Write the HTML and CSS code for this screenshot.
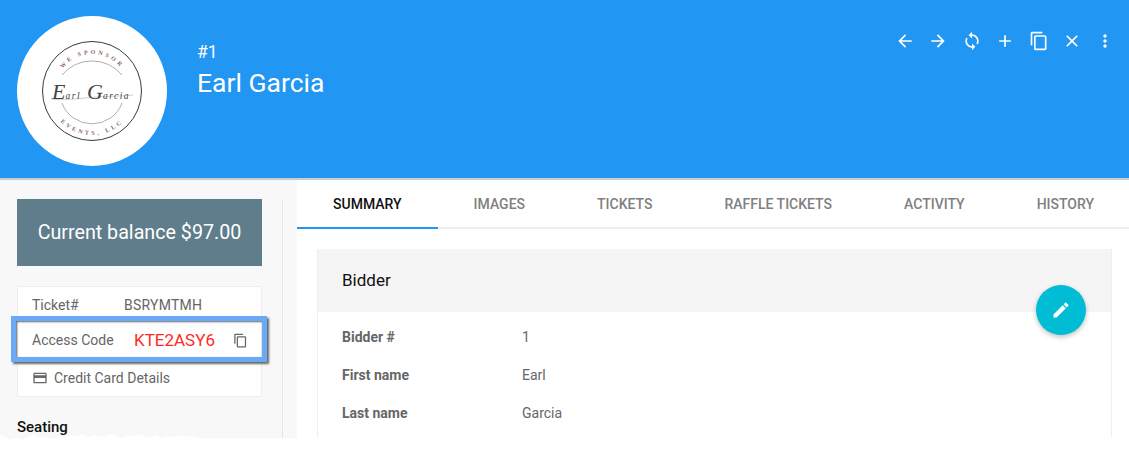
FILE: index.html
```html
<!DOCTYPE html>
<html lang="en">
<head>
    <meta charset="UTF-8">
    <title>Earl Garcia</title>
    <link rel="stylesheet" href="styles.css">
</head>
<body>

    <!-- Header -->
    <header class="topbar">
        <div class="avatar">
            <svg class="logo" viewBox="0 0 150 150" width="150" height="150">
                <defs>
                    <path id="logoTop" d="M38 75a37 37 0 0 1 74 0"/>
                    <path id="logoBottom" d="M31 75a44 44 0 0 0 88 0"/>
                </defs>
                <circle class="logo-ring" cx="75" cy="75" r="49.5"/>
                <path class="logo-arc" d="M45 59a39 39 0 0 1 60 0"/>
                <path class="logo-arc" d="M45 87a32 32 0 0 0 60 0"/>
                <text class="logo-small"><textPath href="#logoTop" startOffset="50%">WE SPONSOR</textPath></text>
                <text class="logo-small"><textPath href="#logoBottom" startOffset="50%">EVENTS, LLC</textPath></text>
                <path class="logo-swash" d="M34 83c14 2 30-1 46-2s30-1 36-2"/>
                <text class="logo-script" x="35" y="83"><tspan class="logo-cap">E</tspan>arl <tspan class="logo-cap" x="70">G</tspan>arcia</text>
            </svg>
        </div>
        <div class="title">
            <div class="title-num">#1</div>
            <div class="title-name">Earl Garcia</div>
        </div>
        <div class="actions">
            <span class="action"><svg viewBox="0 0 24 24"><path d="M20 11H7.83l5.59-5.59L12 4l-8 8 8 8 1.41-1.41L7.83 13H20v-2z"/></svg></span>
            <span class="action"><svg viewBox="0 0 24 24"><path d="M12 4l-1.41 1.41L16.17 11H4v2h12.17l-5.58 5.59L12 20l8-8z"/></svg></span>
            <span class="action"><svg viewBox="0 0 24 24"><path d="M12 4V1L8 5l4 4V6c3.31 0 6 2.69 6 6 0 1.01-.25 1.97-.7 2.8l1.46 1.46C19.54 15.03 20 13.57 20 12c0-4.42-3.58-8-8-8zm0 14c-3.31 0-6-2.69-6-6 0-1.01.25-1.97.7-2.8L5.24 7.74C4.46 8.97 4 10.43 4 12c0 4.42 3.58 8 8 8v3l4-4-4-4v3z"/></svg></span>
            <span class="action"><svg viewBox="0 0 24 24"><path d="M19 13h-6v6h-2v-6H5v-2h6V5h2v6h6v2z"/></svg></span>
            <span class="action"><svg viewBox="0 0 24 24"><path d="M16 1H4c-1.1 0-2 .9-2 2v14h2V3h12V1zm3 4H8c-1.1 0-2 .9-2 2v14c0 1.1.9 2 2 2h11c1.1 0 2-.9 2-2V7c0-1.1-.9-2-2-2zm0 16H8V7h11v14z"/></svg></span>
            <span class="action"><svg viewBox="0 0 24 24"><path d="M19 6.41L17.59 5 12 10.59 6.41 5 5 6.41 10.59 12 5 17.59 6.41 19 12 13.41 17.59 19 19 17.59 13.41 12z"/></svg></span>
            <span class="action"><svg viewBox="0 0 24 24"><path d="M12 8c1.1 0 2-.9 2-2s-.9-2-2-2-2 .9-2 2 .9 2 2 2zm0 2c-1.1 0-2 .9-2 2s.9 2 2 2 2-.9 2-2-.9-2-2-2zm0 6c-1.1 0-2 .9-2 2s.9 2 2 2 2-.9 2-2-.9-2-2-2z"/></svg></span>
        </div>
    </header>

    <div class="content">
        <!-- Sidebar -->
        <aside class="sidebar">
            <div class="sidebar-inner">
                <div class="balance">Current balance $97.00</div>
                <div class="info-card">
                    <div class="info-row info-ticket">
                        <span class="info-label">Ticket#</span>
                        <span class="info-value">BSRYMTMH</span>
                    </div>
                    <div class="info-row info-access">
                        <span class="info-label">Access Code</span>
                        <span class="access-code">KTE2ASY6</span>
                        <svg class="copy-icon" viewBox="0 0 24 24"><path d="M16 1H4c-1.1 0-2 .9-2 2v14h2V3h12V1zm3 4H8c-1.1 0-2 .9-2 2v14c0 1.1.9 2 2 2h11c1.1 0 2-.9 2-2V7c0-1.1-.9-2-2-2zm0 16H8V7h11v14z"/></svg>
                        <div class="highlight"></div>
                    </div>
                    <div class="info-row info-card-link">
                        <svg class="card-icon" viewBox="0 0 24 24"><path d="M20 4H4c-1.11 0-1.99.89-1.99 2L2 18c0 1.11.89 2 2 2h16c1.11 0 2-.89 2-2V6c0-1.11-.89-2-2-2zm0 14H4v-6h16v6zm0-10H4V6h16v2z"/></svg>
                        <span>Credit Card Details</span>
                    </div>
                </div>
                <h4 class="seating">Seating</h4>
            </div>
        </aside>

        <!-- Main Content -->
        <main class="main">
            <nav class="tabs">
                <a class="tab active">Summary</a>
                <a class="tab">Images</a>
                <a class="tab">Tickets</a>
                <a class="tab">Raffle Tickets</a>
                <a class="tab">Activity</a>
                <a class="tab">History</a>
            </nav>
            <section class="panel">
                <div class="panel-head">Bidder</div>
                <button class="fab"><svg viewBox="0 0 24 24"><path d="M3 17.25V21h3.75L17.81 9.94l-3.75-3.75L3 17.25zM20.71 7.04c.39-.39.39-1.02 0-1.41l-2.34-2.34c-.39-.39-1.02-.39-1.41 0l-1.83 1.83 3.75 3.75 1.83-1.83z"/></svg></button>
                <div class="panel-body">
                    <div class="field"><span class="field-label">Bidder #</span><span>1</span></div>
                    <div class="field"><span class="field-label">First name</span><span>Earl</span></div>
                    <div class="field"><span class="field-label">Last name</span><span>Garcia</span></div>
                </div>
            </section>
        </main>
    </div>

    <!-- Torn bottom edge of the screenshot -->
    <svg class="torn" viewBox="0 0 1129 35" width="1129" height="35">
        <path d="M0 5l5 2 5 3 6-2 6 2 6-3 5-2 7 3 6-1 6 2 7-3 6 2 5-3 7 1 6-2 5 3 6-2 7 2 5-1 6-2 5 3 6 1 5-3 6 2 4-3 6 2 5 2 7-3 6 3 5-2 7 1 6-2 5 2 7-1 6 2 4 0L1129 7V35H0z"/>
    </svg>

</body>
</html>
```

FILE: styles.css
```css
* {
    margin: 0;
    padding: 0;
    box-sizing: border-box;
}

html, body {
    height: 465px;
    overflow: hidden;
}

body {
    position: relative;
    font-family: 'Roboto', sans-serif;
    font-size: 14px;
    color: #666;
    background: #fff;
}

/* Header */
.topbar {
    display: flex;
    height: 180px;
    padding: 16px 7px 0 17px;
    background: #2196f3;
    border-bottom: 2px solid #ccc;
    color: #fff;
}

.avatar {
    width: 150px;
    height: 150px;
    border-radius: 50%;
    background: #fff;
}

.logo {
    display: block;
}

.logo-ring {
    fill: none;
    stroke: #222;
    stroke-width: 0.9;
}

.logo-arc {
    fill: none;
    stroke: #777;
    stroke-width: 0.6;
}

.logo-small {
    font-family: 'Liberation Serif', serif;
    font-size: 6px;
    font-weight: 700;
    letter-spacing: 2.8px;
    text-anchor: middle;
    fill: #8a665c;
}

.logo-script {
    font-family: 'Liberation Serif', serif;
    font-style: italic;
    font-size: 9.5px;
    letter-spacing: 1.5px;
    fill: #444;
}

.logo-cap {
    font-size: 22px;
    letter-spacing: 0;
}

.logo-swash {
    fill: none;
    stroke: #888;
    stroke-width: 0.4;
}

.title {
    margin: 25px 0 0 30px;
    flex: 1;
}

.title-num {
    font-size: 17.5px;
    line-height: 22px;
}

.title-name {
    margin-top: 4px;
    font-size: 26.5px;
    line-height: 32px;
}

.actions {
    display: flex;
    height: 50px;
}

.action {
    display: flex;
    align-items: center;
    justify-content: center;
    width: 33.4px;
}

.action svg {
    width: 20px;
    height: 20px;
    fill: #fff;
}

/* Layout */
.content {
    display: flex;
    height: 285px;
}

/* Sidebar */
.sidebar {
    width: 297px;
    padding: 19px 14px 0 17px;
    background: #f8f8f8;
}

.sidebar-inner {
    height: 100%;
    padding-right: 20px;
    border-right: 1px solid #e6e6e6;
}

.balance {
    height: 67px;
    line-height: 67px;
    text-align: center;
    font-size: 19.7px;
    color: #fff;
    background: #607d8b;
}

.info-card {
    margin-top: 20px;
    height: 111px;
    padding-top: 1px;
    background: #fff;
    border: 1px solid #eee;
    border-radius: 2px;
}

.info-row {
    display: flex;
    align-items: center;
    padding-left: 14px;
}

.info-ticket {
    height: 33px;
}

.info-access {
    position: relative;
    height: 38px;
}

.info-card-link {
    height: 38px;
    gap: 6px;
}

.info-value {
    letter-spacing: 0.25px;
}

.info-ticket .info-label {
    width: 92px;
}

.info-access .info-label {
    width: 102px;
}

.access-code {
    width: 99px;
    font-size: 17px;
    color: #ff2a1f;
}

.copy-icon {
    width: 15px;
    height: 15px;
    fill: #666;
}

.card-icon {
    width: 16px;
    height: 16px;
    fill: #666;
}

/* annotation box drawn over the access code row */
.highlight {
    position: absolute;
    top: -5px;
    left: -7px;
    width: 256px;
    height: 46px;
    border: 5px solid #6aa9f8;
    box-shadow: 2px 2px 2px #666, inset 1px 1px 2px #666;
}

.seating {
    margin-top: 21px;
    font-size: 15px;
    font-weight: 500;
    color: #111;
}

/* Main */
.main {
    flex: 1;
    min-width: 0;
}

.tabs {
    display: flex;
    height: 49px;
    border-bottom: 2px solid #eee;
    white-space: nowrap;
}

.tab {
    height: 49px;
    padding: 0 36px;
    line-height: 49px;
    font-size: 14px;
    font-weight: 500;
    text-transform: uppercase;
    color: #808080;
}

.tab.active {
    color: #111;
    border-bottom: 2px solid #2196f3;
}

.panel {
    position: relative;
    margin: 20px 17px 0 20px;
    height: 220px;
    border: 1px solid #eee;
    border-top: none;
}

.panel-head {
    height: 63px;
    line-height: 63px;
    padding-left: 24px;
    font-size: 17px;
    color: #111;
    background: #f5f5f5;
}

.fab {
    position: absolute;
    top: 36px;
    right: 25px;
    display: flex;
    align-items: center;
    justify-content: center;
    width: 50px;
    height: 50px;
    border: none;
    border-radius: 50%;
    background: #00bcd4;
    box-shadow: 0 2px 5px rgba(0, 0, 0, 0.25);
}

.fab svg {
    width: 20px;
    height: 20px;
    fill: #fff;
}

.panel-body {
    padding: 6px 24px 0;
}

.field {
    display: flex;
    height: 38px;
    line-height: 38px;
}

.field-label {
    width: 180px;
    font-weight: 700;
}

.torn {
    position: absolute;
    left: 0;
    bottom: 0;
    display: block;
    fill: #fff;
}
```
